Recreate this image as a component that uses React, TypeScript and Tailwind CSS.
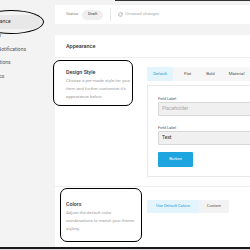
import React from "react";

export default function App() {
  const font = { fontFamily: "Roboto, 'Noto Sans', sans-serif" };
  return (
    <div
      className="relative w-[250px] h-[250px] overflow-hidden bg-[#f3f3f3] flex flex-col"
      style={font}
    >
      <div className="flex h-[247px] shrink-0">
        {/* Sidebar */}
        <div className="w-[55px] shrink-0 pt-[15px] flex flex-col overflow-hidden">
          <div className="h-[14px] w-[42px] bg-[#e8e8e8] rounded-r-full flex items-center">
            <span className="ml-[-16px] text-[5px] text-[#333] whitespace-nowrap">Appearance</span>
          </div>
          <div className="h-[13.5px] flex items-center">
            <span className="ml-[-15px] text-[5px] text-[#555] whitespace-nowrap">Privacy</span>
          </div>
          <div className="h-[13.5px] flex items-center">
            <span className="ml-[-16px] text-[5px] text-[#555] whitespace-nowrap">Email Notifications</span>
          </div>
          <div className="h-[13.5px] flex items-center">
            <span className="ml-[-16px] text-[5px] text-[#555] whitespace-nowrap">Integrations</span>
          </div>
          <div className="h-[13.5px] flex items-center">
            <span className="ml-[-16px] text-[5px] text-[#555] whitespace-nowrap">Analytics</span>
          </div>
        </div>

        {/* Main */}
        <div className="flex-1 flex flex-col pt-[5px]">
          <div className="h-[19px] bg-white flex items-center pl-[11px] shrink-0">
            <span className="text-[4.3px] text-[#888]">Status</span>
            <span className="ml-[4px] h-[10px] w-[21px] rounded-full bg-[#efefef] text-[4.3px] text-[#444] flex items-center justify-center">
              Draft
            </span>
            <span className="ml-[7px] w-px h-[12px] bg-[#e5e5e5]" />
            <svg className="ml-[7px]" width="5" height="5" viewBox="0 0 24 24" fill="none" stroke="#999" strokeWidth="3">
              <path d="M21 12a9 9 0 1 1-3-6.7L21 8" />
              <path d="M21 3v5h-5" />
            </svg>
            <span className="ml-[2px] text-[4.3px] text-[#aaa] whitespace-nowrap">Unsaved changes</span>
          </div>

          <div className="mt-[11px] flex-1 bg-white flex flex-col">
            <div className="h-[23px] border-b border-[#eeeeee] flex items-center pl-[11px] shrink-0">
              <span className="text-[5.5px] text-[#333] font-medium">Appearance</span>
            </div>

            {/* Design Style section */}
            <div className="flex pt-[9px] pb-[9px] border-b border-[#eeeeee]">
              <div className="w-[92px] shrink-0 pl-[11px] pt-[1px]">
                <div className="text-[5.3px] text-[#333] font-medium leading-[8px]">Design Style</div>
                <div className="mt-[1px] text-[4.4px] text-[#a0a0a0] leading-[8px] whitespace-nowrap">
                  Choose a pre-made style for your
                  <br />
                  form and further customize it's
                  <br />
                  appearance below.
                </div>
              </div>
              <div className="flex-1 flex flex-col">
                <div className="h-[14px] bg-[#f6f6f6] flex items-center text-[4.3px]">
                  <span className="h-full w-[26px] bg-[#e3f4fd] text-[#2a9fd8] flex items-center justify-center">Default</span>
                  <span className="ml-[11px] text-[#555]">Flat</span>
                  <span className="ml-[15px] text-[#555]">Bold</span>
                  <span className="ml-[14px] text-[#555]">Material</span>
                </div>
                <div className="mt-[4px] border border-[#e8e8e8] pl-[10px] pt-[10px] pb-[9px] flex flex-col">
                  <div className="text-[3.8px] text-[#555] leading-[5px]">Field Label</div>
                  <div className="mt-[1px] h-[14px] w-[110px] bg-[#f0f0f0] border border-[#d8d8d8] rounded-[1px] flex items-center pl-[3px] text-[5px] text-[#aaa]">
                    Placeholder
                  </div>
                  <div className="mt-[9px] text-[3.8px] text-[#555] leading-[5px]">Field Label</div>
                  <div className="mt-[1px] h-[14px] w-[110px] bg-[#f0f0f0] border border-[#d8d8d8] rounded-[1px] flex items-center pl-[3px] text-[5px] text-[#333]">
                    Text
                  </div>
                  <div className="mt-[7px] h-[15px] w-[35px] bg-[#1ea5e0] rounded-[1px] flex items-center justify-center text-[4.3px] text-white">
                    Button
                  </div>
                </div>
              </div>
            </div>

            {/* Colors section */}
            <div className="flex pt-[13px]">
              <div className="w-[92px] shrink-0 pl-[11px]">
                <div className="text-[5.3px] text-[#333] font-medium leading-[8px]">Colors</div>
                <div className="mt-[1px] text-[4.4px] text-[#a0a0a0] leading-[8px] whitespace-nowrap">
                  Adjust the default color
                  <br />
                  combinations to match your theme
                  <br />
                  styling.
                </div>
              </div>
              <div className="flex-1 flex items-start">
                <span className="h-[13px] w-[52px] bg-[#e3f4fd] text-[#2a9fd8] text-[4.1px] flex items-center justify-center">
                  Use Default Colors
                </span>
                <span className="h-[13px] w-[30px] bg-[#f3f3f3] text-[#555] text-[4.1px] flex items-center justify-center">
                  Custom
                </span>
              </div>
            </div>
          </div>
        </div>
      </div>
      <div className="h-[2px] bg-[#1a1a1a] shrink-0" />
      <div className="flex-1 bg-[#d8d8d8]" />

      {/* top line */}
      <div className="absolute left-[115px] right-0 top-0 h-px bg-[#333]" />

      {/* Annotations */}
      <div className="absolute left-[-22px] top-[10px] w-[66px] h-[24px] rounded-[50%] border-[1.5px] border-black" />
      <div className="absolute left-[53px] top-[60px] w-[80px] h-[46px] rounded-[7px] border-[1.5px] border-black" />
      <div className="absolute left-[60px] top-[188px] w-[82px] h-[54px] rounded-[7px] border-[1.5px] border-black" />
    </div>
  );
}
